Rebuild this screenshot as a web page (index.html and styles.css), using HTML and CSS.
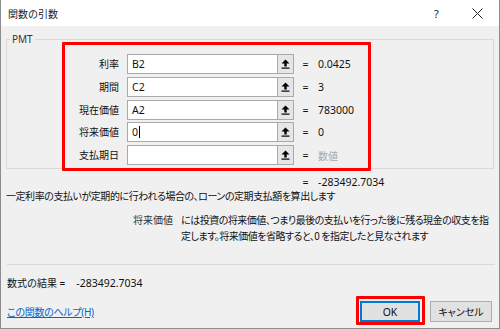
FILE: index.html
```html
<!DOCTYPE html>
<html lang="ja">
<head>
<meta charset="utf-8">
<link rel="stylesheet" href="styles.css">
</head>
<body>
<div class="window">
  <div class="titlebar">
    <span class="title">関数の引数</span>
    <span class="help-btn">?</span>
    <span class="close-btn"><svg width="11" height="11" viewBox="0 0 11 11"><path d="M0.5 0.5 L10.5 10.5 M10.5 0.5 L0.5 10.5" stroke="#222" stroke-width="1" fill="none"/></svg></span>
  </div>
  <div class="content">
    <fieldset class="group">
      <legend>PMT</legend>
      <div class="args">
        <div class="lbl">利率</div>
        <div class="inp">B2</div>
        <div class="ref"><svg width="9" height="10" viewBox="0 0 9 10"><path d="M4.5 0.5 L8.5 4.5 H5.7 V7.5 H3.3 V4.5 H0.5 Z" fill="#000"/><rect x="0.5" y="8.5" width="8" height="1.2" fill="#000"/></svg></div>
        <div class="eq">=</div>
        <div class="val">0.0425</div>

        <div class="lbl">期間</div>
        <div class="inp">C2</div>
        <div class="ref"><svg width="9" height="10" viewBox="0 0 9 10"><path d="M4.5 0.5 L8.5 4.5 H5.7 V7.5 H3.3 V4.5 H0.5 Z" fill="#000"/><rect x="0.5" y="8.5" width="8" height="1.2" fill="#000"/></svg></div>
        <div class="eq">=</div>
        <div class="val">3</div>

        <div class="lbl">現在価値</div>
        <div class="inp">A2</div>
        <div class="ref"><svg width="9" height="10" viewBox="0 0 9 10"><path d="M4.5 0.5 L8.5 4.5 H5.7 V7.5 H3.3 V4.5 H0.5 Z" fill="#000"/><rect x="0.5" y="8.5" width="8" height="1.2" fill="#000"/></svg></div>
        <div class="eq">=</div>
        <div class="val">783000</div>

        <div class="lbl">将来価値</div>
        <div class="inp">0<span class="caret"></span></div>
        <div class="ref"><svg width="9" height="10" viewBox="0 0 9 10"><path d="M4.5 0.5 L8.5 4.5 H5.7 V7.5 H3.3 V4.5 H0.5 Z" fill="#000"/><rect x="0.5" y="8.5" width="8" height="1.2" fill="#000"/></svg></div>
        <div class="eq">=</div>
        <div class="val">0</div>

        <div class="lbl">支払期日</div>
        <div class="inp"></div>
        <div class="ref"><svg width="9" height="10" viewBox="0 0 9 10"><path d="M4.5 0.5 L8.5 4.5 H5.7 V7.5 H3.3 V4.5 H0.5 Z" fill="#000"/><rect x="0.5" y="8.5" width="8" height="1.2" fill="#000"/></svg></div>
        <div class="eq">=</div>
        <div class="val placeholder">数値</div>
      </div>
    </fieldset>
    <div class="result-row">
      <div class="eq">=</div>
      <div class="val">-283492.7034</div>
    </div>
    <p class="desc">一定利率の支払いが定期的に行われる場合の、ローンの定期支払額を算出します</p>
    <div class="argdesc">
      <div class="argname">将来価値</div>
      <div class="argtext">には投資の将来価値、つまり最後の支払いを行った後に残る現金の収支を指<br>定します。将来価値を省略すると、0 を指定したと見なされます</div>
    </div>
    <div class="separator"></div>
    <div class="formula">数式の結果 =<span class="formula-val">-283492.7034</span></div>
    <div class="footer">
      <a class="helplink" href="#">この関数のヘルプ(H)</a>
      <div class="buttons">
        <button class="btn btn-ok">OK</button>
        <button class="btn">キャンセル</button>
      </div>
    </div>
  </div>
  <div class="highlight hl-args"></div>
  <div class="highlight hl-ok"></div>
</div>
</body>
</html>
```

FILE: styles.css
```css
* { box-sizing: border-box; }
html, body { margin: 0; padding: 0; }
body {
  font-family: "Noto Sans", "Noto Sans CJK JP", sans-serif;
  font-size: 10px;
  color: #111;
  background: #ffffff;
}
.window {
  position: relative;
  width: 500px;
  height: 329px;
  background: #f0f0f0;
  border: 1px solid #8c8c8c;
  border-top: none;
  overflow: hidden;
}
.titlebar {
  height: 26px;
  background: #ffffff;
  display: flex;
  align-items: center;
  padding-left: 7px;
}
.title {
  flex: 1;
  font-size: 10px;
  color: #222;
}
.help-btn {
  width: 12px;
  font-size: 11px;
  color: #222;
  margin-right: 26px;
}
.close-btn {
  display: flex;
  margin-right: 16px;
}
.content {
  padding: 0 6px 0 5px;
}
.group {
  margin: 7px 0 0 0;
  padding: 9px 0 3px 0;
  border: 1px solid #d9d9d9;
  min-width: 0;
  width: 488px;
}
.group legend {
  margin-left: 3px;
  padding: 0 2px;
  font-size: 10px;
  line-height: 12px;
  color: #333;
}
.args {
  display: grid;
  grid-template-columns: 120px 150px 17px 24px 1fr;
  row-gap: 2.75px;
  align-items: center;
}
.lbl {
  text-align: right;
  padding-right: 8px;
  line-height: 20px;
}
.inp {
  height: 20px;
  background: #fff;
  border: 1px solid #a9a9a9;
  border-right: none;
  padding-left: 4px;
  line-height: 18px;
  font-size: 10.5px;
  display: flex;
  align-items: center;
}
.caret {
  display: inline-block;
  width: 1px;
  height: 12px;
  background: #000;
  margin-left: 1px;
}
.ref {
  height: 20px;
  background: #e6e6e6;
  border: 1px solid #a9a9a9;
  display: flex;
  align-items: center;
  justify-content: center;
}
.ref svg { display: block; }
.eq {
  text-align: center;
  font-size: 10.5px;
  padding-right: 1px;
}
.val {
  font-size: 10.5px;
}
.placeholder {
  color: #a8a8a8;
  font-size: 10px;
}
.result-row {
  display: grid;
  grid-template-columns: 288px 24px 1fr;
  margin-top: 6px;
  line-height: 14px;
}
.result-row .eq { grid-column: 2; }
.result-row .val { grid-column: 3; }
.desc {
  margin: 0;
  height: 14px;
  line-height: 14px;
  font-family: "Noto Sans CJK JP", sans-serif;
  font-feature-settings: "palt";
  letter-spacing: -0.45px;
  white-space: nowrap;
}
.argdesc {
  display: grid;
  grid-template-columns: 127px 44px 1fr;
  margin-top: 9px;
  font-family: "Noto Sans CJK JP", sans-serif;
  font-feature-settings: "palt";
}
.argname {
  grid-column: 2;
  color: #333;
  line-height: 16px;
}
.argtext {
  grid-column: 3;
  padding-left: 4px;
  letter-spacing: -0.5px;
  white-space: nowrap;
  line-height: 16px;
  height: 32px;
}
.separator {
  height: 1px;
  background: #d9d9d9;
  margin-top: 20px;
  width: 488px;
  margin-left: 1px;
}
.formula {
  margin-top: 11px;
  height: 14px;
  line-height: 14px;
  padding-left: 1px;
}
.formula-val {
  margin-left: 11px;
  font-size: 10.5px;
}
.footer {
  display: flex;
  justify-content: space-between;
  align-items: center;
  margin-top: 11px;
  padding-left: 1px;
}
.helplink {
  color: #0066cc;
  text-decoration: underline;
  font-feature-settings: "palt";
  letter-spacing: -0.3px;
}
.buttons {
  display: flex;
  gap: 10px;
  padding-right: 1px;
}
.btn {
  width: 62px;
  height: 21px;
  font-family: "Noto Sans", "Noto Sans CJK JP", sans-serif;
  font-size: 10px;
  background: #e1e1e1;
  border: 1px solid #adadad;
  color: #111;
  padding: 0;
  font-feature-settings: "palt";
}
.btn-ok {
  width: 60px;
  border: 2px solid #0078d7;
  font-size: 10.5px;
}
.highlight {
  position: absolute;
  border: 3px solid #ff0000;
  border-radius: 1px;
  pointer-events: none;
}
.hl-args {
  left: 61px;
  top: 42px;
  width: 309px;
  height: 129px;
}
.hl-ok {
  left: 355px;
  top: 296px;
  width: 69px;
  height: 29px;
}
```
